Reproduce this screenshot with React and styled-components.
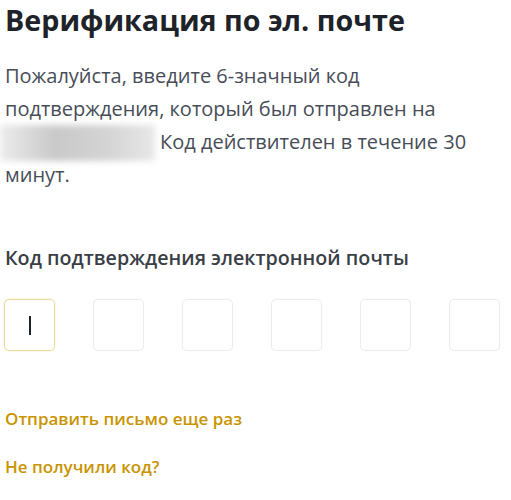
import React from "react";
import styled, { createGlobalStyle } from "styled-components";

const Global = createGlobalStyle`
  html, body { margin: 0; padding: 0; background: #fff; }
  body { font-family: "Open Sans", Roboto, sans-serif; }
`;

const Page = styled.div`
  width: 511px;
  padding: 0 0 0 5px;
  box-sizing: border-box;
  display: flex;
  flex-direction: column;
`;

const Title = styled.h1`
  margin: 0;
  font-family: "Open Sans", sans-serif;
  font-size: 28.7px;
  line-height: 40px;
  font-weight: 700;
  color: #1e2329;
`;

const Text = styled.p`
  margin: 18.5px 0 0;
  font-size: 20px;
  line-height: 33px;
  color: #474d57;
`;

const Blur = styled.span`
  display: inline-block;
  vertical-align: middle;
  width: 155px;
  height: 36px;
  margin: -4px 5px -4px -5px;
  background: linear-gradient(90deg, #ececec 0%, #c9c9c9 35%, #d4d4d4 70%, #e8e8e8 100%);
  filter: blur(3px);
`;

const Label = styled.div`
  margin-top: 54.5px;
  font-size: 19.7px;
  line-height: 26px;
  font-weight: 600;
  color: #3a3f47;
`;

const Boxes = styled.div`
  display: flex;
  gap: 38px;
  margin-top: 28px;
  margin-left: -1px;
`;

const Box = styled.div`
  width: 51px;
  height: 52px;
  box-sizing: border-box;
  border-radius: 5px;
  border: 1px solid ${(p) => (p.$active ? "#e6dca0" : "#ececec")};
  box-shadow: ${(p) => (p.$active ? "0 0 2px #f0e6b0" : "0 0 1px #f2f2f2")};
  display: flex;
  align-items: center;
  justify-content: center;
`;

const Caret = styled.span`
  width: 2px;
  height: 19px;
  background: #1e2329;
`;

const Link = styled.a`
  display: block;
  font-size: 17px;
  line-height: 22px;
  font-weight: 600;
  color: #c99400;
  text-decoration: none;
  margin-top: ${(p) => p.$mt}px;
`;

export default function App() {
  return (
    <>
      <Global />
      <Page>
        <Title>Верификация по эл. почте</Title>
        <Text>
          Пожалуйста, введите 6-значный код
          <br />
          подтверждения, который был отправлен на
          <br />
          <Blur />
          Код действителен в течение 30
          <br />
          минут.
        </Text>
        <Label>Код подтверждения электронной почты</Label>
        <Boxes>
          {[0, 1, 2, 3, 4, 5].map((i) => (
            <Box key={i} $active={i === 0}>
              {i === 0 && <Caret />}
            </Box>
          ))}
        </Boxes>
        <Link $mt={57}>Отправить письмо еще раз</Link>
        <Link $mt={26}>Не получили код?</Link>
      </Page>
    </>
  );
}
